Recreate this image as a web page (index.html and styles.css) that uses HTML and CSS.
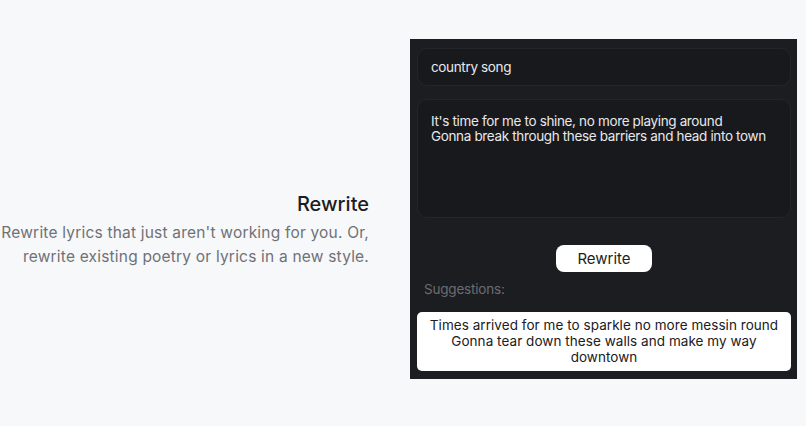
FILE: index.html
```html
<!DOCTYPE html>
<html>
<head>
<meta charset="utf-8">
<link rel="stylesheet" href="styles.css">
</head>
<body>
<div class="page">
  <div class="intro">
    <h2 class="title">Rewrite</h2>
    <p class="desc">Rewrite lyrics that just aren't working for you. Or, rewrite existing poetry or lyrics in a new style.</p>
  </div>
  <div class="panel">
    <div class="field">country song</div>
    <div class="area">It's time for me to shine, no more playing around<br>Gonna break through these barriers and head into town</div>
    <div class="actions"><button class="btn">Rewrite</button></div>
    <div class="label">Suggestions:</div>
    <div class="suggestion">Times arrived for me to sparkle no more messin round<br>Gonna tear down these walls and make my way<br>downtown</div>
  </div>
</div>
</body>
</html>
```
FILE: styles.css
```css
html, body {
  margin: 0;
  padding: 0;
  background: #f7f8fa;
  font-family: "Inter", "Noto Sans", sans-serif;
}
.page {
  display: flex;
  align-items: flex-start;
  padding-top: 39px;
  gap: 41px;
}
.intro {
  width: 369px;
  text-align: right;
  padding-top: 153px;
}
.title {
  margin: 0;
  font-size: 20px;
  line-height: 24px;
  font-weight: 500;
  color: #1d1d1f;
}
.desc {
  margin: 5px 0 0;
  font-size: 15.5px;
  line-height: 24px;
  color: #707176;
  letter-spacing: 0.2px;
}
.panel {
  width: 387px;
  height: 340px;
  box-sizing: border-box;
  background: #1c1d21;
  padding: 9px 6px 8px 7px;
  display: flex;
  flex-direction: column;
}
.field, .area {
  background: #18191d;
  border: 1px solid #24252a;
  border-radius: 10px;
  color: #e8e8ea;
  font-size: 13.5px;
  letter-spacing: -0.35px;
  box-sizing: border-box;
  padding-left: 13px;
}
.field {
  height: 38px;
  line-height: 36px;
}
.area {
  margin-top: 13px;
  height: 119px;
  padding-top: 14px;
  line-height: 15px;
}
.actions {
  display: flex;
  justify-content: center;
  margin-top: 27px;
}
.btn {
  width: 96px;
  height: 27px;
  border: none;
  border-radius: 8px;
  background: #ffffff;
  color: #1e1e20;
  font-family: inherit;
  font-size: 15px;
  padding: 0;
}
.label {
  margin-top: 9px;
  padding-left: 7px;
  color: #6b6c71;
  font-size: 13.5px;
  letter-spacing: -0.2px;
  line-height: 16px;
}
.suggestion {
  margin-top: 15px;
  height: 59px;
  box-sizing: border-box;
  background: #ffffff;
  border-radius: 5px;
  text-align: center;
  color: #202022;
  font-size: 13.5px;
  letter-spacing: 0.05px;
  line-height: 16px;
  padding: 5px 4px 0;
}
```
